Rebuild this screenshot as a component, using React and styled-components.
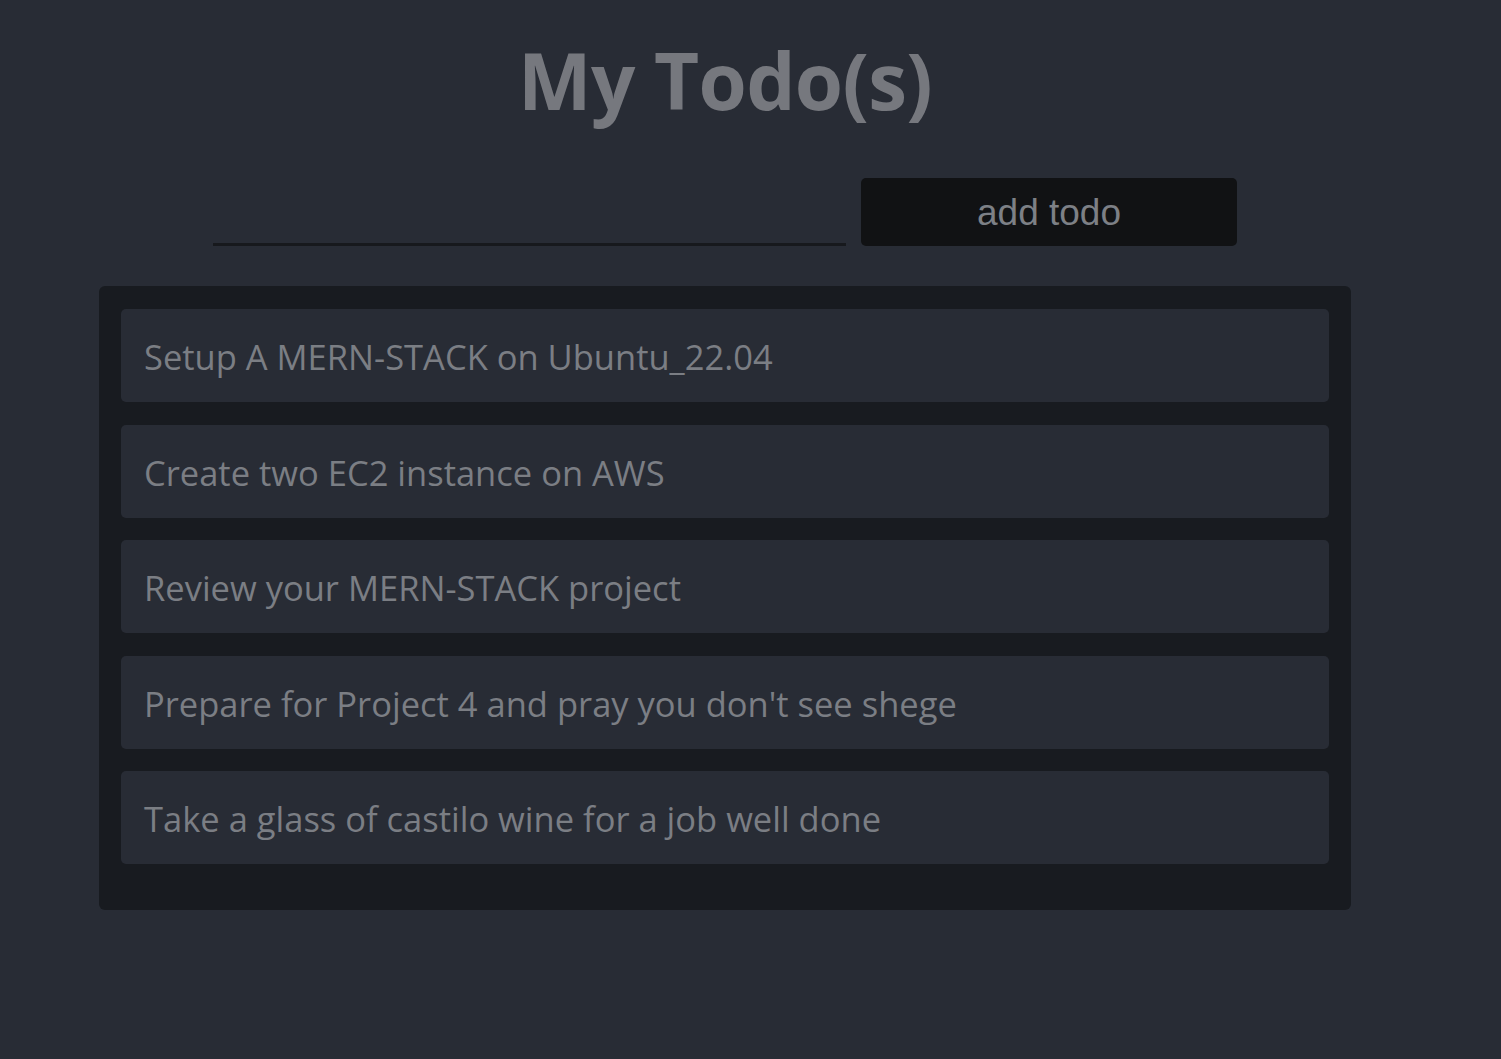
import React, { useState } from 'react';
import styled, { createGlobalStyle } from 'styled-components';

const GlobalStyle = createGlobalStyle`
  html, body {
    margin: 0;
    padding: 0;
    background: #282c35;
    min-height: 100%;
  }
  body {
    font-family: "Open Sans", "Noto Sans", sans-serif;
  }
`;

const Page = styled.div`
  width: 1450px;
  min-height: 1059px;
  display: flex;
  flex-direction: column;
  align-items: center;
`;

const Title = styled.h1`
  margin: 32px 0 0;
  font-size: 78px;
  line-height: 96px;
  font-weight: 700;
  color: #76787e;
  letter-spacing: -0.7px;
`;

const Form = styled.form`
  display: flex;
  align-items: flex-end;
  gap: 15px;
  margin-top: 50px;
`;

const Input = styled.input`
  width: 633px;
  height: 61px;
  box-sizing: border-box;
  background: transparent;
  border: none;
  border-bottom: 3px solid #17191d;
  outline: none;
  color: #9a9ca1;
  font-size: 30px;
  font-family: "Open Sans", sans-serif;
`;

const Button = styled.button`
  width: 376px;
  height: 68px;
  border: none;
  border-radius: 5px;
  background: #111214;
  color: #7d8086;
  font-family: "Liberation Sans", Arial, sans-serif;
  font-size: 37px;
  padding-top: 2px;
  cursor: pointer;
`;

const List = styled.div`
  width: 1252px;
  box-sizing: border-box;
  margin-top: 40px;
  padding: 23px 22px 46px;
  background: #181b20;
  border-radius: 6px;
  display: flex;
  flex-direction: column;
  gap: 22.5px;
`;

const Item = styled.div`
  height: 93px;
  box-sizing: border-box;
  padding: 2px 23px 0;
  display: flex;
  align-items: center;
  background: #282c35;
  border-radius: 5px;
  color: #7b7e84;
  font-size: 34.5px;
`;

const todos = [
  'Setup A MERN-STACK on Ubuntu_22.04',
  'Create two EC2 instance on AWS',
  'Review your MERN-STACK project',
  "Prepare for Project 4 and pray you don't see shege",
  'Take a glass of castilo wine for a job well done',
];

const App = () => {
  const [text, setText] = useState('');

  return (
    <Page>
      <GlobalStyle />
      <Title>My Todo(s)</Title>
      <Form onSubmit={(e) => e.preventDefault()}>
        <Input value={text} onChange={(e) => setText(e.target.value)} />
        <Button type="submit">add todo</Button>
      </Form>
      <List>
        {todos.map((t) => (
          <Item key={t}>{t}</Item>
        ))}
      </List>
    </Page>
  );
};

export default App;
